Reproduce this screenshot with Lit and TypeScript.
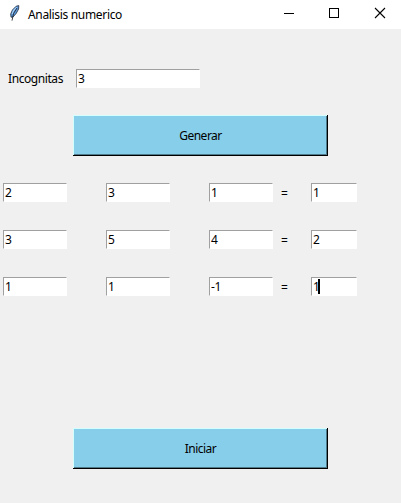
import { LitElement, html, css, svg } from "lit";
import { customElement, property } from "lit/decorators.js";

@customElement("tk-entry")
class TkEntry extends LitElement {
  @property() value = "";
  @property({ type: Boolean }) focused = false;

  static styles = css`
    :host {
      display: flex;
      align-items: center;
      box-sizing: border-box;
      height: 19px;
      padding-left: 1px;
      background: #fff;
      border: 1px solid #fff;
      border-top-color: #a0a0a0;
      border-left-color: #a0a0a0;
      line-height: 17px;
    }
    .caret {
      width: 2px;
      height: 15px;
      margin-left: -2px;
      background: #000;
    }
  `;

  render() {
    return html`<span>${this.value}</span>${this.focused ? html`<span class="caret"></span>` : ""}`;
  }
}

@customElement("tk-button")
class TkButton extends LitElement {
  static styles = css`
    :host {
      display: flex;
      align-items: center;
      justify-content: center;
      box-sizing: border-box;
      width: 255px;
      height: 41px;
      background: #87ceeb;
      letter-spacing: -0.5px;
      box-shadow: inset 0 -1px #000, inset -1px 0 #000, inset 1px 1px #d3ffff, inset -2px -2px #50798a;
    }
  `;

  render() {
    return html`<slot></slot>`;
  }
}

const feather = svg`
  <path d="M10.8 .6 8.2 1.2 4.4 5 2.7 9 3 12.2 5 12 8.2 8.4 10.6 4Z" fill="#5e9ade" stroke="#202a38" stroke-width=".8"/>
  <path d="M8.8 2.3 5.5 5.6 4.3 9" fill="none" stroke="#a4d0f8" stroke-width="1.2"/>
  <path d="M9 3 5.6 8.4 4 15.6" fill="none" stroke="#141414" stroke-width=".8"/>`;

@customElement("app-root")
class AppRoot extends LitElement {
  private rows = [
    ["2", "3", "1", "1"],
    ["3", "5", "4", "2"],
    ["1", "1", "-1", "1"],
  ];

  static styles = css`
    :host {
      display: flex;
      flex-direction: column;
      box-sizing: border-box;
      width: 401px;
      height: 503px;
      background: #f0f0f0;
      color: #000;
      font: 12px/17px "Noto Sans", "Open Sans", sans-serif;
      letter-spacing: -0.25px;
      overflow: hidden;
    }
    .titlebar {
      display: flex;
      align-items: center;
      flex: none;
      height: 29px;
      background: #fff;
    }
    .feather {
      width: 14px;
      height: 16px;
      margin: 0 6px 3px 8px;
    }
    .title {
      flex: 1;
      margin-bottom: 1px;
      letter-spacing: -0.33px;
    }
    .controls {
      width: 134px;
      height: 29px;
    }
    .form {
      display: flex;
      align-items: center;
      height: 19px;
      margin: 40px 0 0 8px;
    }
    .label {
      width: 68px;
      letter-spacing: -0.42px;
    }
    .unknowns {
      width: 124px;
    }
    .generate {
      margin: 27px 0 0 73px;
    }
    .matrix {
      display: flex;
      flex-direction: column;
      gap: 28px;
      margin: 27px 0 0 3px;
    }
    .row {
      display: flex;
      height: 19px;
    }
    .coefficients {
      display: grid;
      grid-template-columns: repeat(3, 64px);
      column-gap: 39px;
    }
    .equals {
      width: 8px;
      margin: 2px 22px 0 8px;
    }
    .result {
      width: 46px;
    }
    .start {
      margin: 132px 0 0 73px;
    }
  `;

  render() {
    return html`
      <header class="titlebar">
        <svg class="feather" viewBox="0 0 14 16">${feather}</svg>
        <span class="title">Analisis numerico</span>
        <svg class="controls" viewBox="0 0 134 29" fill="none" stroke="#000">
          <path d="M17 13.5h10M62.5 8.5h9v9h-9z" shape-rendering="crispEdges" />
          <path d="m108 8 10 10m0-10-10 10" stroke-width="1.1" />
        </svg>
      </header>
      <div class="form">
        <span class="label">Incognitas</span>
        <tk-entry class="unknowns" value="3"></tk-entry>
      </div>
      <tk-button class="generate">Generar</tk-button>
      <div class="matrix">
        ${this.rows.map(
          (row, r) => html`
            <div class="row">
              <div class="coefficients">
                ${row.slice(0, 3).map((v) => html`<tk-entry value=${v}></tk-entry>`)}
              </div>
              <span class="equals">=</span>
              <tk-entry class="result" value=${row[3]} ?focused=${r === 2}></tk-entry>
            </div>
          `
        )}
      </div>
      <tk-button class="start">Iniciar</tk-button>
    `;
  }
}
